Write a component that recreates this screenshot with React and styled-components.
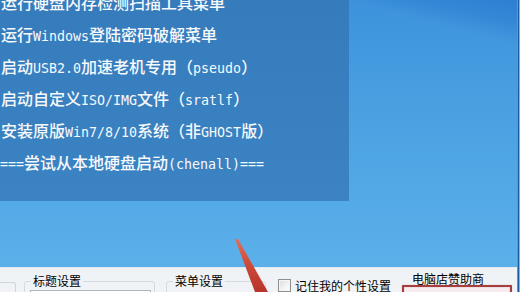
import React from "react";
import styled, { createGlobalStyle } from "styled-components";

const Global = createGlobalStyle`
  html, body { margin: 0; padding: 0; background: #5aaee8; }
  body { font-family: "Noto Sans CJK SC", "Noto Sans", sans-serif; }
`;

const Root = styled.div`
  position: relative;
  width: 520px;
  height: 292px;
  overflow: hidden;
  display: flex;
`;

const Main = styled.div`
  width: 517px;
  display: flex;
  flex-direction: column;
`;

const Edge = styled.div`
  width: 3px;
  background: linear-gradient(
    to right,
    #4d9be0 0 1px,
    #1b5ca0 1px 2px,
    #7ab6e9 2px 3px
  );
`;

const Desktop = styled.div`
  height: 267px;
  flex: none;
  background:
    linear-gradient(194deg, rgba(25, 105, 200, 0.45) 0%, rgba(25, 105, 200, 0.3) 6%, rgba(25, 105, 200, 0) 11%),
    linear-gradient(180deg, #3d93db 0%, #4fa6e4 60%, #5cb0ea 100%);
`;

const MenuPanel = styled.div`
  width: 349px;
  height: 201px;
  overflow: hidden;
  background: linear-gradient(180deg, #367cbd 0%, #3b83c3 100%);
`;

const MenuList = styled.ul`
  list-style: none;
  margin: -14px 0 0 0;
  padding: 0 0 0 1px;
`;

const MenuItem = styled.li`
  height: 32px;
  line-height: 32px;
  font-size: 16px;
  font-weight: 500;
  color: #f6f9fc;
  white-space: nowrap;
  margin-left: ${(p) => (p.$shift ? "-1px" : "0")};
`;

const Latin = styled.span`
  font-family: "DejaVu Sans Mono", "Liberation Mono", monospace;
  font-size: 13.3px;
  font-weight: 400;
`;

const Strip = styled.div`
  flex: 1;
  display: flex;
  align-items: flex-start;
  padding-right: 5px;
  background: linear-gradient(180deg, #eef2f6 0%, #f1f3f6 100%);
  border-top: 1px solid #e2e9ef;
  box-sizing: border-box;
  overflow: hidden;
  font-size: 12px;
  line-height: 12px;
  color: #000;
`;

const Stub = styled.div`
  flex: none;
  width: 16px;
  height: 20px;
  margin-top: 14px;
  box-sizing: border-box;
  border-top: 1px solid #cfd6dd;
  border-right: 1px solid #cfd6dd;
  border-radius: 0 3px 0 0;
`;

const Group = styled.fieldset`
  flex: none;
  width: ${(p) => p.$w}px;
  margin: 7px 0 0 ${(p) => p.$ml}px;
  padding: 0 6px;
  min-width: 0;
  height: 30px;
  box-sizing: border-box;
  border: 1px solid #d3dae0;
  border-radius: 3px;
`;

const Legend = styled.legend`
  padding: 0 2px;
  font-size: 12px;
  line-height: 12px;
`;

const TextBox = styled.div`
  margin: 3px -3px 0 -1px;
  height: 12px;
  border: 1px solid #aeb4bb;
  background: #fff;
`;

const CheckRow = styled.label`
  flex: none;
  display: flex;
  align-items: center;
  margin: 11px 0 0 12px;
  gap: 4px;
`;

const CheckBox = styled.span`
  width: 13px;
  height: 13px;
  box-sizing: border-box;
  border: 1px solid #8e8f8f;
  background: linear-gradient(135deg, #dcdcdc 0%, #f4f4f4 60%, #ffffff 100%);
  box-shadow: inset 0 0 0 1px #f4f4f4;
`;

const Sponsor = styled.div`
  flex: none;
  width: 110px;
  margin-left: auto;
  display: flex;
  flex-direction: column;
`;

const SponsorLabel = styled.div`
  margin: 5px 0 0 10px;
  line-height: 12px;
`;

const RedBox = styled.div`
  height: 30px;
  box-sizing: border-box;
  border: 2px solid #a3403f;
  border-radius: 1px;
  background: #f6eced;
  box-shadow: 0 0 1px #c46b6b, inset 0 0 1px #c46b6b;
`;

const Arrow = styled.svg`
  position: absolute;
  left: 0;
  top: 0;
  pointer-events: none;
`;

const mixed = (s) =>
  s
    .split(/([\x20-\x7e]+)/)
    .filter(Boolean)
    .map((seg, i) =>
      /[\x20-\x7e]/.test(seg[0]) ? <Latin key={i}>{seg}</Latin> : <span key={i}>{seg}</span>
    );

const items = [
  "运行硬盘内存检测扫描工具菜单",
  "运行Windows登陆密码破解菜单",
  "启动USB2.0加速老机专用（pseudo）",
  "启动自定义ISO/IMG文件（sratlf）",
  "安装原版Win7/8/10系统（非GHOST版）",
  "===尝试从本地硬盘启动(chenall)===",
];

export default function App() {
  return (
    <>
      <Global />
      <Root>
        <Main>
          <Desktop>
            <MenuPanel>
              <MenuList>
                {items.map((t, i) => (
                  <MenuItem key={i} $shift={t.startsWith("=")}>
                    {mixed(t)}
                  </MenuItem>
                ))}
              </MenuList>
            </MenuPanel>
          </Desktop>
          <Strip>
            <Stub />
            <Group $ml={8} $w={131}>
              <Legend>标题设置</Legend>
              <TextBox />
            </Group>
            <Group $ml={11} $w={100}>
              <Legend>菜单设置</Legend>
            </Group>
            <CheckRow>
              <CheckBox />
              <span>记住我的个性设置</span>
            </CheckRow>
            <Sponsor>
              <SponsorLabel>电脑店赞助商</SponsorLabel>
              <RedBox />
            </Sponsor>
          </Strip>
        </Main>
        <Edge />
        <Arrow width="520" height="292" viewBox="0 0 520 292">
          <defs>
            <linearGradient id="arrowGrad" x1="0" y1="0" x2="0" y2="1">
              <stop offset="0" stopColor="#e0705f" />
              <stop offset="0.5" stopColor="#cc4838" />
              <stop offset="1" stopColor="#b8342a" />
            </linearGradient>
          </defs>
          <polygon points="235,239 238,239 268,292 255,292" fill="url(#arrowGrad)" />
        </Arrow>
      </Root>
    </>
  );
}
